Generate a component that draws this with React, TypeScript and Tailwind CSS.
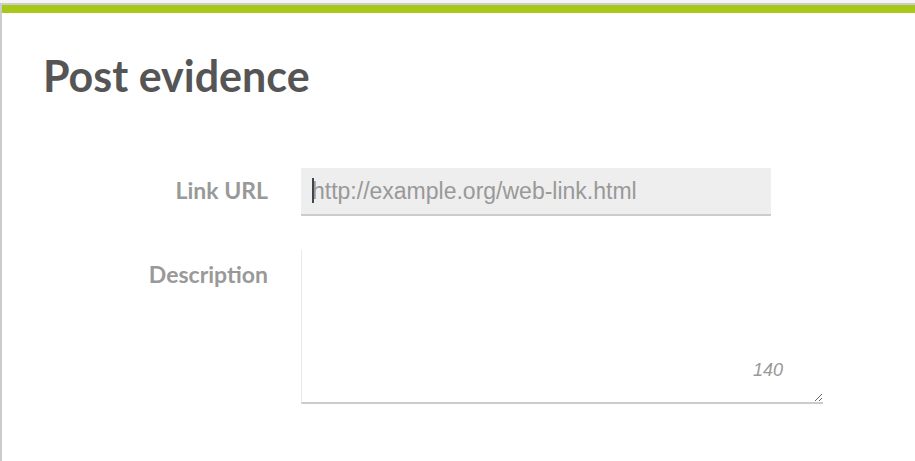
export default function App() {
  return (
    <div className="min-h-[461px] w-[915px] bg-[#f4f4f4] pt-[5px] overflow-hidden">
      <div className="min-h-[456px] bg-white border-l-2 border-[#cccccc] shadow-[0_-2px_0_#cccccc]">
        <div className="h-[8px] bg-[#a8c817]" />
        <div className="pl-[41px] pt-[37px]">
          <h1
            className="text-[43px] leading-[52px] font-bold text-[#555555]"
            style={{ fontFamily: 'Lato, "Noto Sans", sans-serif' }}
          >
            Post evidence
          </h1>
        </div>
        <form className="mt-[66px] grid grid-cols-[266px_auto] gap-x-[33px] gap-y-[34px] items-start">
          <label
            className="text-right text-[23px] font-bold text-[#999999] pt-[8px] leading-[28px]"
            style={{ fontFamily: 'Lato, "Noto Sans", sans-serif' }}
          >
            Link URL
          </label>
          <div className="relative w-[470px]">
            <input
              type="text"
              placeholder="http://example.org/web-link.html"
              className="w-full h-[48px] bg-[#eeeeee] border-b-2 border-[#cccccc] pl-[11px] text-[23px] text-[#333] placeholder:text-[#999999] outline-none"
              style={{ fontFamily: '"Liberation Sans", Arial, sans-serif', caretColor: 'transparent' }}
            />
            <span className="absolute left-[11px] top-[10px] w-[2px] h-[25px] bg-[#444444]" />
          </div>
          <label
            className="text-right text-[23px] font-bold text-[#999999] pt-[10px] leading-[28px]"
            style={{ fontFamily: 'Lato, "Noto Sans", sans-serif' }}
          >
            Description
          </label>
          <div className="relative w-[522px]">
            <textarea
              className="block w-full h-[154px] bg-white border-l border-[#e8e8e8] border-b-2 border-b-[#cccccc] outline-none resize"
            />
            <span
              className="absolute right-[40px] bottom-[20px] text-[18px] italic text-[#999999]"
              style={{ fontFamily: '"Liberation Sans", Arial, sans-serif' }}
            >
              140
            </span>
          </div>
        </form>
      </div>
    </div>
  )
}
